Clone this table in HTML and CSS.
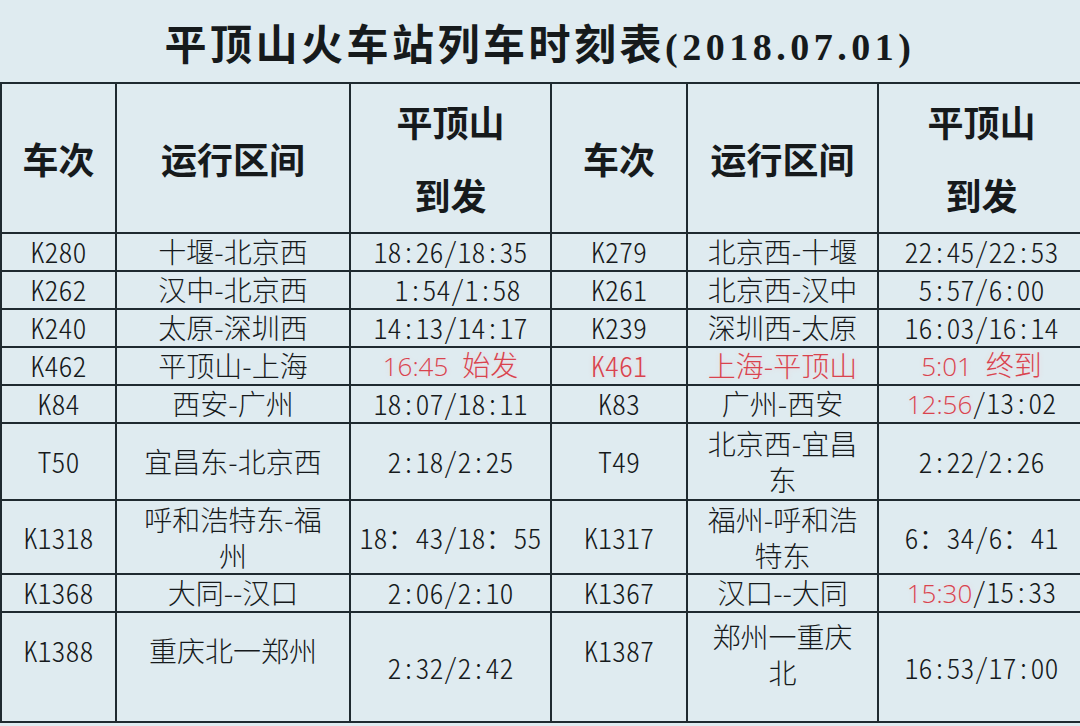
FILE: index.html
```html
<!DOCTYPE html>
<html lang="zh-CN">
<head>
<meta charset="utf-8">
<title>平顶山火车站列车时刻表</title>
<link rel="stylesheet" href="styles.css">
</head>
<body>
<div class="sheet">
  <h1 class="title">平顶山火车站列车时刻表<span class="date">(2018.07.01)</span></h1>
  <table class="timetable">
    <colgroup>
      <col class="c-no"><col class="c-route"><col class="c-time">
      <col class="c-no2"><col class="c-route2"><col class="c-time2">
    </colgroup>
    <thead>
      <tr class="row-head">
        <th>车次</th><th>运行区间</th><th class="two">平顶山<br>到发</th>
        <th>车次</th><th>运行区间</th><th class="two">平顶山<br>到发</th>
      </tr>
    </thead>
    <tbody>
      <tr class="row-s">
        <td class="num">K280</td><td>十堰-北京西</td><td class="num">18:26/18:35</td>
        <td class="num">K279</td><td>北京西-十堰</td><td class="num">22:45/22:53</td>
      </tr>
      <tr class="row-s">
        <td class="num">K262</td><td>汉中-北京西</td><td class="num">&nbsp;1:54/1:58</td>
        <td class="num">K261</td><td>北京西-汉中</td><td class="num">5:57/6:00</td>
      </tr>
      <tr class="row-s">
        <td class="num">K240</td><td>太原-深圳西</td><td class="num">14:13/14:17</td>
        <td class="num">K239</td><td>深圳西-太原</td><td class="num">16:03/16:14</td>
      </tr>
      <tr class="row-s">
        <td class="num">K462</td><td>平顶山-上海</td><td class="num red"><span class="sans">16:45</span> 始发</td>
        <td class="num red">K461</td><td class="red">上海-平顶山</td><td class="num red"><span class="sans">5:01</span> 终到</td>
      </tr>
      <tr class="row-s">
        <td class="num">K84</td><td>西安-广州</td><td class="num">18:07/18:11</td>
        <td class="num">K83</td><td>广州-西安</td><td class="num"><span class="red sans">12:56</span>/13:02</td>
      </tr>
      <tr class="row-m1">
        <td class="num">T50</td><td>宜昌东-北京西</td><td class="num">2:18/2:25</td>
        <td class="num">T49</td><td>北京西-宜昌<br>东</td><td class="num">2:22/2:26</td>
      </tr>
      <tr class="row-m2">
        <td class="num">K1318</td><td>呼和浩特东-福<br>州</td><td class="num">18：43/18：55</td>
        <td class="num">K1317</td><td>福州-呼和浩<br>特东</td><td class="num">6：34/6：41</td>
      </tr>
      <tr class="row-s">
        <td class="num">K1368</td><td>大同--汉口</td><td class="num">2:06/2:10</td>
        <td class="num">K1367</td><td>汉口--大同</td><td class="num"><span class="red sans">15:30</span>/15:33</td>
      </tr>
      <tr class="row-l">
        <td class="num raise">K1388</td><td class="raise">重庆北一郑州</td><td class="num">2:32/2:42</td>
        <td class="num raise">K1387</td><td class="raise-2">郑州一重庆<br>北</td><td class="num">16:53/17:00</td>
      </tr>
    </tbody>
  </table>
</div>
</body>
</html>
```
FILE: styles.css
```css
html, body {
  margin: 0;
  padding: 0;
  background: #dfebf0;
}

.sheet {
  width: 1080px;
  height: 726px;
  overflow: hidden;
  background: #dfebf0;
  color: #161a1c;
  font-family: "Noto Sans CJK SC", "Noto Sans", sans-serif;
}

.title {
  margin: 0;
  height: 82px;
  box-sizing: border-box;
  padding-top: 14px;
  text-align: center;
  font-size: 42px;
  line-height: 56px;
  font-weight: 700;
  letter-spacing: 3.5px;
  white-space: nowrap;
}

.title .date {
  font-family: "Liberation Serif", serif;
  font-size: 38px;
  letter-spacing: 4.5px;
}

.timetable {
  border-collapse: collapse;
  table-layout: fixed;
  width: 1084px;
  margin-left: 0;
}

.c-no { width: 115px; }
.c-route { width: 234px; }
.c-time { width: 201px; }
.c-no2 { width: 136px; }
.c-route2 { width: 191px; }
.c-time2 { width: 207px; }

.timetable th,
.timetable td {
  border: 2px solid #1f2a30;
  padding: 0 6px;
  text-align: center;
  vertical-align: middle;
  white-space: nowrap;
}

.timetable th {
  font-size: 36px;
  font-weight: 700;
  line-height: 44px;
}

.timetable th.two {
  line-height: 73px;
}

.timetable td {
  font-size: 28px;
  font-weight: 300;
  line-height: 33px;
}

.row-head { height: 149.5px; }
.row-s { height: 38px; }
.row-m1 { height: 77px; }
.row-m2 { height: 74px; }
.row-l { height: 110px; }

.row-m1 td,
.row-m2 td,
.row-l td {
  line-height: 36px;
}

.num {
  font-feature-settings: "hwid";
}

.red {
  color: #d9434e;
  text-shadow: 0 0 5px rgba(255, 190, 195, 0.45);
}

.sans {
  font-family: "Open Sans", "Liberation Sans", sans-serif;
  font-size: 26px;
  font-weight: 300;
  font-feature-settings: normal;
}

.raise {
  padding-bottom: 34px !important;
}

.raise-2 {
  padding-bottom: 26px !important;
}
```
